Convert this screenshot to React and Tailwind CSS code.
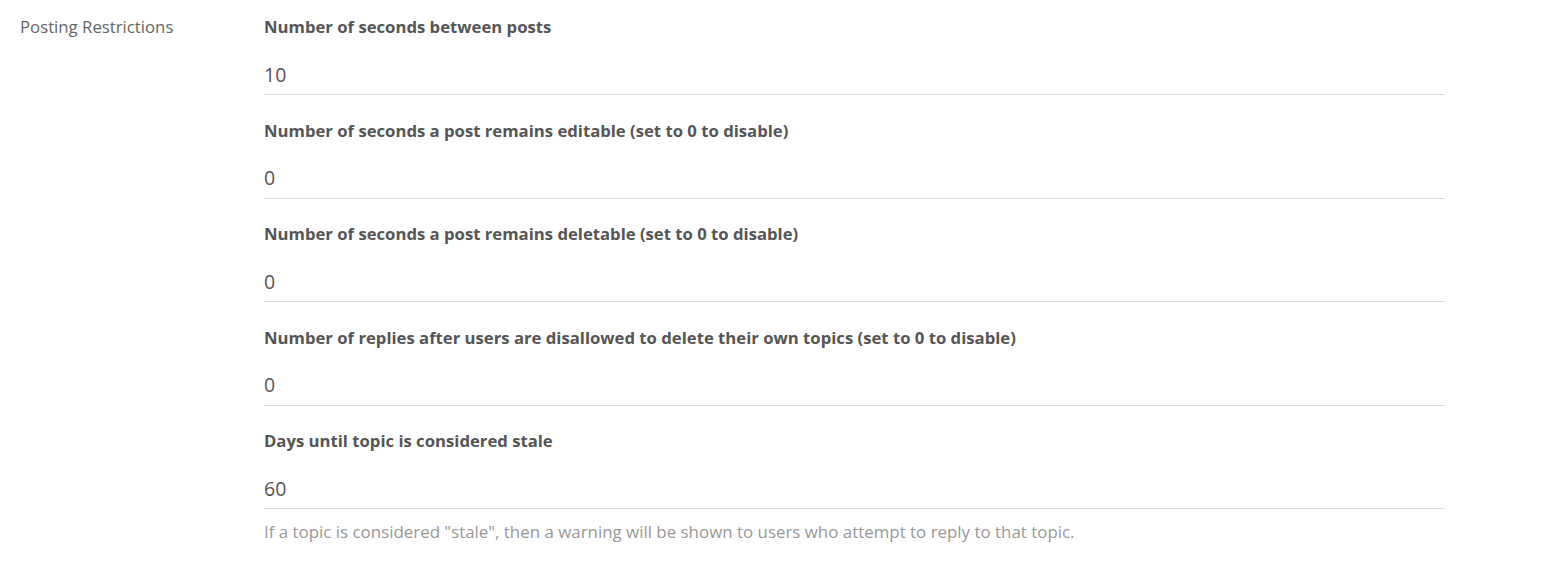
import { useState } from 'react'

const FIELDS = [
  { id: 'postDelay', label: 'Number of seconds between posts', value: '10' },
  { id: 'postEditDuration', label: 'Number of seconds a post remains editable (set to 0 to disable)', value: '0' },
  { id: 'postDeleteDuration', label: 'Number of seconds a post remains deletable (set to 0 to disable)', value: '0' },
  {
    id: 'preventTopicDeleteAfterReplies',
    label: 'Number of replies after users are disallowed to delete their own topics (set to 0 to disable)',
    value: '0',
  },
  {
    id: 'topicStaleDays',
    label: 'Days until topic is considered stale',
    value: '60',
    help: 'If a topic is considered "stale", then a warning will be shown to users who attempt to reply to that topic.',
  },
]

function Field({ field }) {
  const [value, setValue] = useState(field.value)
  return (
    <div className="flex flex-col">
      <label htmlFor={field.id} className="text-[16.7px] font-bold leading-5 text-[#555]">
        {field.label}
      </label>
      <input
        id={field.id}
        type="text"
        value={value}
        onChange={(e) => setValue(e.target.value)}
        className="mt-[17px] h-[41px] border-b border-[#ddd] bg-transparent text-[19.5px] text-[#555] outline-none"
      />
      {field.help && <p className="mt-[13px] text-[16.9px] leading-5 text-[#999]">{field.help}</p>}
    </div>
  )
}

export default function App() {
  return (
    <div className="min-h-[569px] bg-white pt-[17px] font-['Open_Sans',sans-serif]">
      <div className="grid grid-cols-[244px_1181px] pl-5">
        <div className="text-[16.75px] leading-5 text-[#666]">Posting Restrictions</div>
        <form className="flex flex-col gap-[25.5px]">
          {FIELDS.map((f) => (
            <Field key={f.id} field={f} />
          ))}
        </form>
      </div>
    </div>
  )
}
